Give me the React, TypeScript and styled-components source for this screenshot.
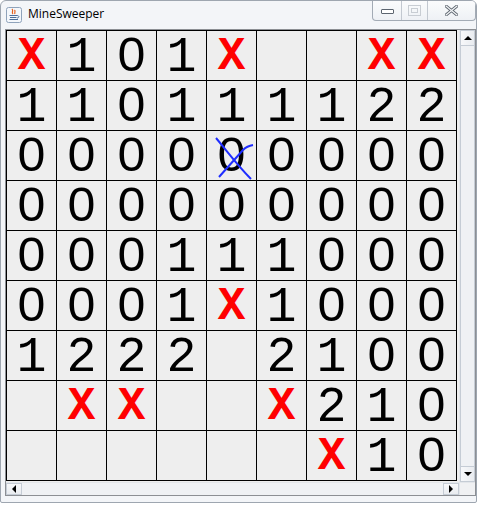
import React from "react";
import styled, { createGlobalStyle } from "styled-components";

const Global = createGlobalStyle`
  html, body { margin: 0; padding: 0; background: #ffffff; }
  body { font-family: "Open Sans", "Noto Sans", sans-serif; }
`;

const Window = styled.div`
  width: 477px;
  height: 503px;
  box-sizing: border-box;
  border: 1px solid #9ea6b0;
  border-radius: 6px 6px 2px 2px;
  background: #f3f5f8;
  display: flex;
  flex-direction: column;
  overflow: hidden;
`;

const TitleBar = styled.div`
  height: 27px;
  flex: none;
  display: flex;
  align-items: flex-start;
  padding-left: 5px;
`;

const TitleIcon = styled.svg`
  width: 16px;
  height: 16px;
  margin-top: 6px;
  flex: none;
`;

const TitleText = styled.span`
  margin-left: 6px;
  margin-top: 5px;
  font-family: "Open Sans", "Noto Sans", sans-serif;
  font-size: 12px;
  line-height: 16px;
  color: #000;
`;

const Captions = styled.div`
  margin-left: auto;
  margin-top: -1px;
  height: 20px;
  display: flex;
  border: 1px solid #a3abb5;
  border-top: none;
  border-radius: 0 0 4px 4px;
  background: linear-gradient(#fbfcfd, #eef1f5);
  overflow: hidden;
`;

const CapButton = styled.div<{ $w: number; $last?: boolean }>`
  width: ${(p) => p.$w}px;
  height: 100%;
  display: flex;
  align-items: center;
  justify-content: center;
  border-right: ${(p) => (p.$last ? "none" : "1px solid #c2c8d0")};
`;

const MinGlyph = styled.div`
  width: 11px;
  height: 3px;
  margin-top: 3px;
  border: 1px solid #5c6570;
  border-radius: 1px;
  background: #fff;
`;

const MaxGlyph = styled.div`
  width: 11px;
  height: 9px;
  border: 1px solid #c8cdd3;
  display: flex;
  align-items: center;
  justify-content: center;
  &::after {
    content: "";
    width: 5px;
    height: 3px;
    border: 1px solid #c8cdd3;
  }
`;

const Body = styled.div`
  flex: 1;
  display: flex;
  padding: 1px 0 7px 4px;
`;

const ScrollPane = styled.div`
  width: 471px;
  height: 467px;
  box-sizing: border-box;
  border: 1px solid #8c8f94;
  display: grid;
  grid-template-columns: 1fr 16px;
  grid-template-rows: 1fr 13px;
  background: #eeeeee;
`;

const Viewport = styled.div`
  background: #eeeeee;
  min-height: 0;
`;

const Board = styled.div`
  display: grid;
  grid-template-columns: repeat(9, 49px);
  grid-auto-rows: 49px;
  gap: 1px;
  width: max-content;
  background: #000;
  border: 1px solid #000;
`;

const Cell = styled.div<{ $mine?: boolean }>`
  position: relative;
  background: #eeeeee;
  display: flex;
  align-items: center;
  justify-content: center;
  font-family: "Liberation Mono", "Courier New", monospace;
  font-size: ${(p) => (p.$mine ? "46px" : "50px")};
  font-weight: ${(p) => (p.$mine ? 700 : 400)};
  color: ${(p) => (p.$mine ? "#ff0000" : "#000")};
  line-height: 40px;
  padding-top: ${(p) => (p.$mine ? "3px" : "5px")};
  box-sizing: border-box;
`;

/* Courier-style plain zero: hides the inner dot of the dotted-zero glyph */
const Zero = styled.span`
  position: relative;
  display: inline-block;
  &::after {
    content: "";
    position: absolute;
    left: 50%;
    top: 18px;
    width: 10px;
    height: 18px;
    transform: translate(-50%, -50%);
    border-radius: 50%;
    background: #eeeeee;
  }
`;

const Scratch = styled.svg`
  position: absolute;
  left: 0;
  top: 0;
  width: 49px;
  height: 49px;
  pointer-events: none;
  z-index: 1;
`;

const VBar = styled.div`
  display: flex;
  flex-direction: column;
  background: #f0f1f3;
  border-left: 1px solid #e3e6ea;
`;

const HBar = styled.div`
  display: flex;
  background: #f0f1f3;
  border-top: 1px solid #e3e6ea;
  position: relative;
  z-index: 1;
`;

const ArrowBtn = styled.div<{ $v?: boolean }>`
  flex: none;
  width: ${(p) => (p.$v ? "auto" : "16px")};
  height: ${(p) => (p.$v ? "16px" : "auto")};
  box-sizing: border-box;
  border: 1px solid #c5ccd5;
  background: linear-gradient(${(p) => (p.$v ? "90deg" : "180deg")}, #f7f8fa, #e9ecf0);
  display: flex;
  align-items: center;
  justify-content: center;
`;

const Thumb = styled.div`
  flex: 1;
  box-sizing: border-box;
  border: 1px solid #c5ccd5;
  border-top: none;
  border-bottom: none;
  background: #eff1f4;
`;

const HTrack = styled.div`
  flex: 1;
  background: #eff1f4;
`;

const Tri = styled.div<{ $dir: "up" | "down" | "left" | "right" }>`
  width: 0;
  height: 0;
  border-style: solid;
  ${(p) =>
    p.$dir === "up"
      ? "border-width: 0 4px 4px 4px; border-color: transparent transparent #000 transparent;"
      : p.$dir === "down"
      ? "border-width: 4px 4px 0 4px; border-color: #000 transparent transparent transparent;"
      : p.$dir === "left"
      ? "border-width: 4px 4px 4px 0; border-color: transparent #000 transparent transparent;"
      : "border-width: 4px 0 4px 4px; border-color: transparent transparent transparent #000;"}
`;

const Corner = styled.div`
  background: #f0f1f3;
  border-top: 1px solid #e3e6ea;
  border-left: 1px solid #e3e6ea;
`;

const rows = [
  "X101X  XX",
  "110111122",
  "000000000",
  "000000000",
  "000111000",
  "0001X1000",
  "1222 2100",
  " XX  X210",
  "      X10",
];

export default function App() {
  return (
    <>
      <Global />
      <Window>
        <TitleBar>
          <TitleIcon viewBox="0 0 16 16">
            <rect x="0.5" y="0.5" width="15" height="15" rx="2" fill="#f4f7fb" stroke="#8fa3bb" />
            <path d="M6 2 C8 4 5 5 7 7 M8.5 3 C10 4.5 8 5.5 9 7" stroke="#e8601c" strokeWidth="1.2" fill="none" />
            <path d="M3.5 8.5 H11 M4 10.5 H10.5 M3.5 12.5 H12" stroke="#4f6f9a" strokeWidth="1" fill="none" />
            <path d="M11 8.5 C13.5 8.5 13.5 11 11 11" stroke="#4f6f9a" strokeWidth="1" fill="none" />
          </TitleIcon>
          <TitleText>MineSweeper</TitleText>
          <Captions>
            <CapButton $w={28}>
              <MinGlyph />
            </CapButton>
            <CapButton $w={25}>
              <MaxGlyph />
            </CapButton>
            <CapButton $w={47} $last>
              <svg width="13" height="11" viewBox="0 0 13 11">
                <path
                  d="M1 1 L12 10 M12 1 L1 10"
                  stroke="#5f6771"
                  strokeWidth="3"
                  strokeLinecap="round"
                  fill="none"
                />
                <path
                  d="M1 1 L12 10 M12 1 L1 10"
                  stroke="#f2f4f6"
                  strokeWidth="1.2"
                  strokeLinecap="round"
                  fill="none"
                />
              </svg>
            </CapButton>
          </Captions>
        </TitleBar>
        <Body>
          <ScrollPane>
            <Viewport>
              <Board>
                {rows.map((row, r) =>
                  row.split("").map((ch, c) => (
                    <Cell key={`${r}-${c}`} $mine={ch === "X"}>
                      {ch === "0" ? <Zero>0</Zero> : ch === " " ? "" : ch}
                      {r === 2 && c === 4 && (
                        <Scratch viewBox="0 0 49 49">
                          <path d="M9 7 C20 20 30 34 44 48" stroke="#1f2eff" strokeWidth="2" fill="none" />
                          <path d="M12 46 L36 19 Q40 15 46 14" stroke="#1f2eff" strokeWidth="2" fill="none" />
                        </Scratch>
                      )}
                    </Cell>
                  ))
                )}
              </Board>
            </Viewport>
            <VBar>
              <ArrowBtn $v>
                <Tri $dir="up" />
              </ArrowBtn>
              <Thumb />
              <ArrowBtn $v>
                <Tri $dir="down" />
              </ArrowBtn>
            </VBar>
            <HBar>
              <ArrowBtn>
                <Tri $dir="left" />
              </ArrowBtn>
              <HTrack />
              <ArrowBtn>
                <Tri $dir="right" />
              </ArrowBtn>
            </HBar>
            <Corner />
          </ScrollPane>
        </Body>
      </Window>
    </>
  );
}
